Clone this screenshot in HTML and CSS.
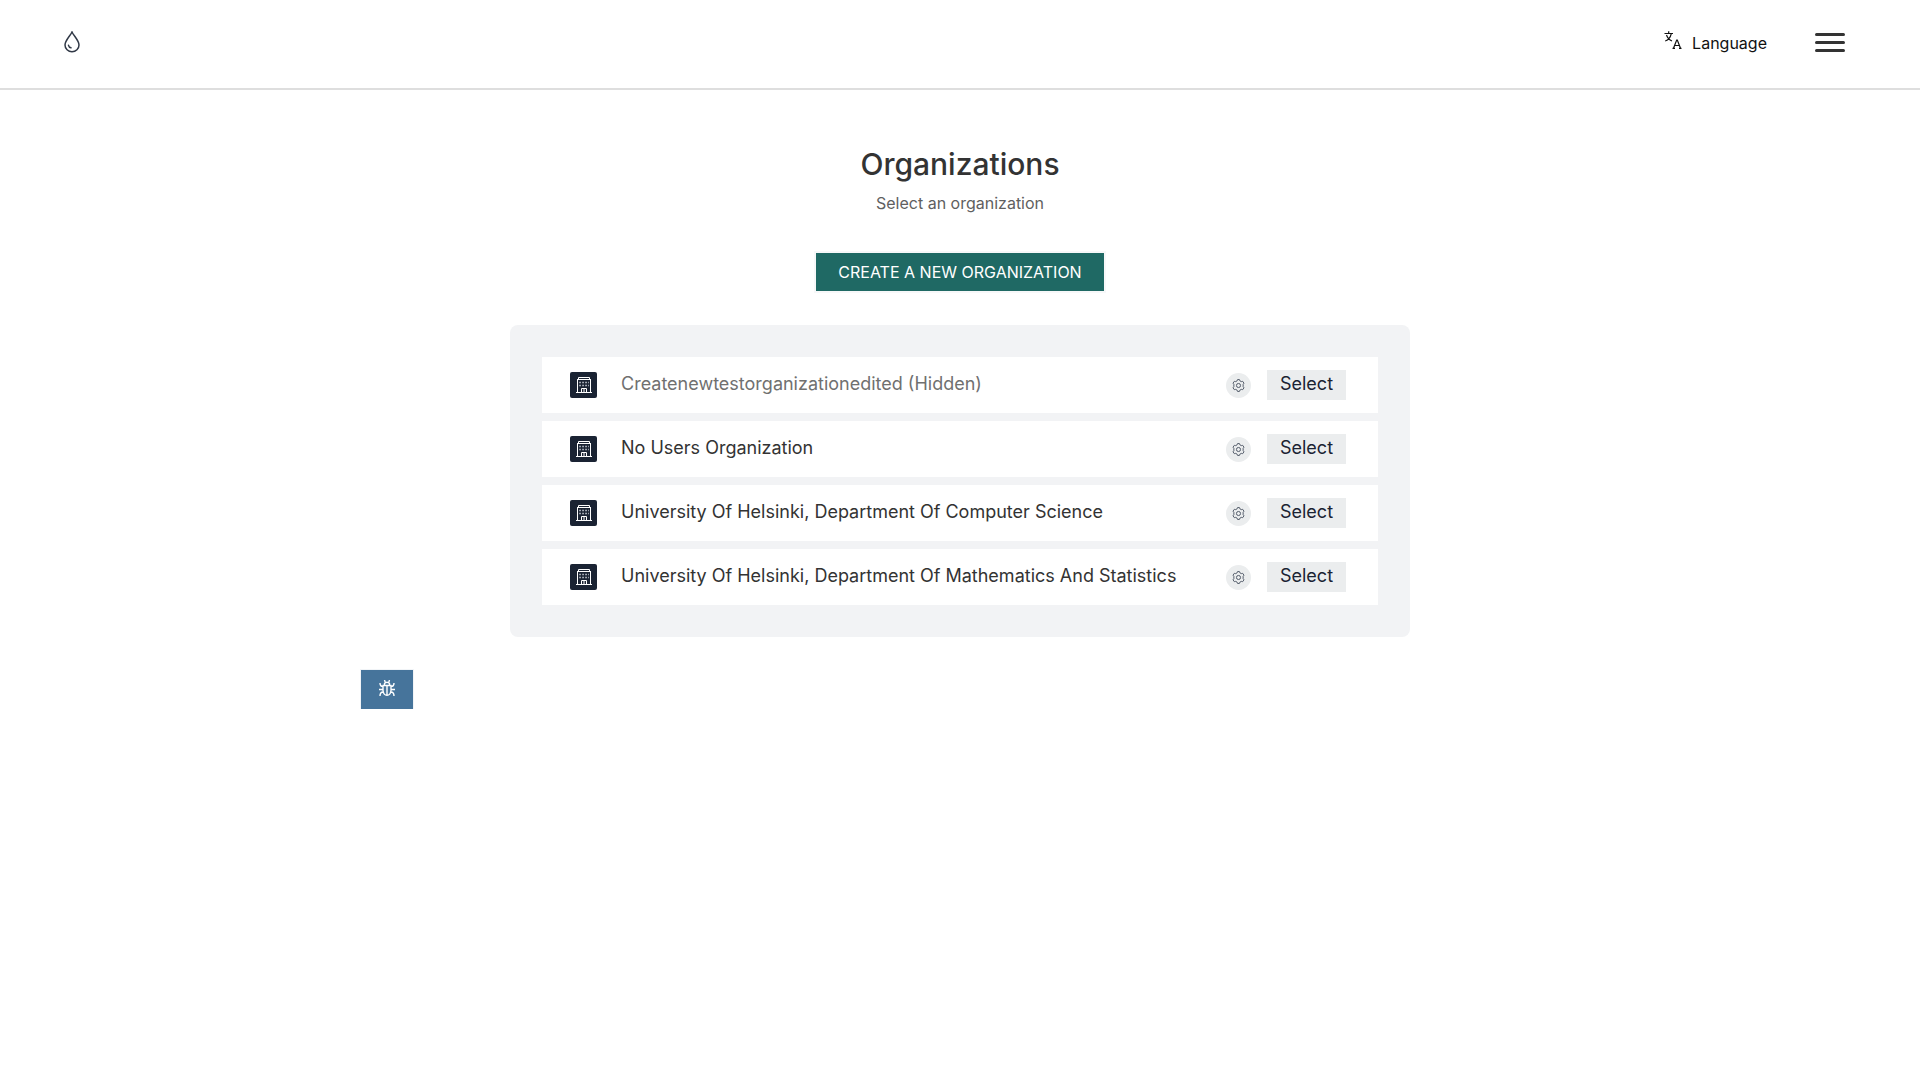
FILE: index.html
```html
<!DOCTYPE html>
<html lang="en">
<head>
<meta charset="utf-8">
<meta name="viewport" content="width=device-width, initial-scale=1">
<title>Organizations</title>
<link rel="stylesheet" href="styles.css">
</head>
<body>
<svg class="sprite" aria-hidden="true">
  <symbol id="building" viewBox="0 0 18 18">
    <path fill="none" stroke="#fff" stroke-width="1" d="M3.500 3.500V1.500H14.500V3.500M2 3.500H16M2.500 16V3.500M15.500 16V3.500M1 16.500H17M6.500 16V12.500H11.500V16M9 12.500V16"/>
    <path fill="none" stroke="#c9ced6" stroke-width="1.500" stroke-dasharray="1.500 1.500" d="M4.300 6.500H14M4.300 9.500H14"/>
  </symbol>
  <symbol id="gear" viewBox="0 0 14 14">
    <path fill="none" stroke="#4b5362" stroke-width="1" stroke-linejoin="round" d="M5.500 2L6 .600H8L8.500 2L10 2.800L11.500 2.500L12.900 4.500L12 5.700V8.300L12.900 9.500L11.500 11.500L10 11.200L8.500 12L8 13.400H6L5.500 12L4 11.200L2.500 11.500L1.100 9.500L2 8.300V5.700L1.100 4.500L2.500 2.500L4 2.800Z"/>
    <circle cx="7" cy="7" r="2.200" fill="none" stroke="#4b5362" stroke-width="1"/>
  </symbol>
</svg>

<header class="header">
  <a class="logo" href="#" aria-label="Home">
    <svg width="16" height="22" viewBox="0 0 16 22" fill="none" stroke="#313947" stroke-width="1.500" stroke-linecap="round">
      <path d="M8 1C6.500 4.500 1 9.500 1 14A7 6.800 0 0 0 15 14C15 9.500 9.500 4.500 8 1Z"/>
      <path d="M4.500 14.300Q5 16.500 7 16.800"/>
    </svg>
  </a>
  <nav class="nav">
    <button class="language" type="button">
      <svg width="18" height="20" viewBox="0 0 18 20" fill="none" stroke="#111" stroke-width="1.200">
        <path d="M.500 2.500H9M4.700 .300V2.500M2.500 4Q4 8.500 8 10M7.300 2.700Q6 8.500 1.200 10"/>
        <path d="M9.500 17.300L12.700 9H13.300L16.500 17.300M10.600 14.500H15.400M8.500 17.300H11M15 17.300H17.500"/>
      </svg>
      <span>Language</span>
    </button>
    <button class="menu" type="button" aria-label="Open menu">
      <span class="bar"></span><span class="bar"></span><span class="bar"></span>
    </button>
  </nav>
</header>

<main class="main">
  <h1 class="title">Organizations</h1>
  <p class="subtitle">Select an organization</p>
  <button class="create" type="button">CREATE A NEW ORGANIZATION</button>
  <ul class="list">
    <li class="row">
      <span class="badge"><svg width="18" height="18"><use href="#building"/></svg></span>
      <span class="name hidden-org">Createnewtestorganizationedited (Hidden)</span>
      <button class="settings" type="button" aria-label="Manage"><svg width="13" height="13"><use href="#gear"/></svg></button>
      <button class="select" type="button">Select</button>
    </li>
    <li class="row">
      <span class="badge"><svg width="18" height="18"><use href="#building"/></svg></span>
      <span class="name">No Users Organization</span>
      <button class="settings" type="button" aria-label="Manage"><svg width="13" height="13"><use href="#gear"/></svg></button>
      <button class="select" type="button">Select</button>
    </li>
    <li class="row">
      <span class="badge"><svg width="18" height="18"><use href="#building"/></svg></span>
      <span class="name">University Of Helsinki, Department Of Computer Science</span>
      <button class="settings" type="button" aria-label="Manage"><svg width="13" height="13"><use href="#gear"/></svg></button>
      <button class="select" type="button">Select</button>
    </li>
    <li class="row">
      <span class="badge"><svg width="18" height="18"><use href="#building"/></svg></span>
      <span class="name">University Of Helsinki, Department Of Mathematics And Statistics</span>
      <button class="settings" type="button" aria-label="Manage"><svg width="13" height="13"><use href="#gear"/></svg></button>
      <button class="select" type="button">Select</button>
    </li>
  </ul>
  <button class="debug" type="button" aria-label="Debug">
    <svg width="16" height="16" viewBox="0 0 16 16" fill="none" stroke="#fff" stroke-width="1.400">
      <path d="M5.500 5V3.500Q8 1 10.500 3.500V5M6.300 2.500L5.500 0M9.700 2.500L10.500 0M3.500 5.500H12.500M4 5.500V10.500Q4.500 15.300 8 15.300Q11.500 15.300 12 10.500V5.500M8 5.500V15.300M4 6.500Q1 6.500 1 3M12 6.500Q15 6.500 15 3M0 9.500H4M12 9.500H16M4.200 12Q1 12 1 16M11.800 12Q15 12 15 16"/>
    </svg>
  </button>
</main>
</body>
</html>
```
FILE: styles.css
```css
* { box-sizing: border-box; }

body {
  margin: 0;
  background: #fff;
  color: #333;
  font-family: Inter, "Liberation Sans", sans-serif;
}

button {
  margin: 0;
  padding: 0;
  border: 0;
  font-family: inherit;
  cursor: pointer;
}

svg { display: block; }

.sprite {
  position: absolute;
  width: 0;
  height: 0;
}

.header {
  display: flex;
  align-items: center;
  justify-content: space-between;
  padding: 29px 75px 33px 64px;
  border-bottom: 2px solid #dedede;
}

.nav {
  display: flex;
  align-items: center;
  gap: 48px;
}

.language {
  display: flex;
  align-items: flex-start;
  gap: 10px;
  padding-top: 2px;
  background: none;
  color: #111;
  font-size: 16px;
  line-height: 24px;
}

.menu {
  display: flex;
  flex-direction: column;
  gap: 5px;
  width: 30px;
  background: none;
}

.bar {
  height: 3px;
  border-radius: 2px;
  background: #333;
}

.main {
  display: flex;
  flex-direction: column;
  align-items: center;
  width: 100%;
  max-width: 1200px;
  margin: 0 auto;
  padding-top: 56px;
}

.title {
  margin: 0;
  font-size: 30px;
  font-weight: 500;
  line-height: 36px;
}

.subtitle {
  margin: 8px 0 37px;
  color: #5f5f5f;
  font-size: 16px;
  line-height: 26px;
}

.create {
  height: 38px;
  padding: 0 22px;
  background: #1f6964;
  color: #fff;
  font-size: 16px;
  outline: 2px solid #f7f8f9;
}

.list {
  display: flex;
  flex-direction: column;
  gap: 8px;
  width: 100%;
  max-width: 900px;
  margin: 34px 0 33px;
  padding: 32px;
  border-radius: 8px;
  background: #f2f3f5;
  list-style: none;
}

.row {
  display: flex;
  align-items: center;
  min-height: 56px;
  padding: 0 32px 0 28px;
  background: #fff;
}

.badge {
  display: grid;
  place-items: center;
  width: 27px;
  height: 26px;
  margin-right: 24px;
  border-radius: 2px;
  background: #1a2333;
}

.name {
  flex: 1;
  color: #333;
  font-size: 18px;
  line-height: 30px;
  padding-bottom: 2px;
}

.hidden-org { color: #707070; }

.settings {
  display: grid;
  place-items: center;
  width: 25px;
  height: 25px;
  margin-right: 16px;
  border-radius: 50%;
  background: #ebedee;
}

.select {
  width: 79px;
  height: 30px;
  padding-bottom: 4px;
  background: #ebedee;
  color: #1a2333;
  font-size: 18px;
}

.debug {
  display: grid;
  place-items: center;
  align-self: flex-start;
  width: 52px;
  height: 39px;
  margin-left: 1px;
  padding-bottom: 3px;
  background: #46749b;
  outline: 1px solid #f1f4f7;
}
```
